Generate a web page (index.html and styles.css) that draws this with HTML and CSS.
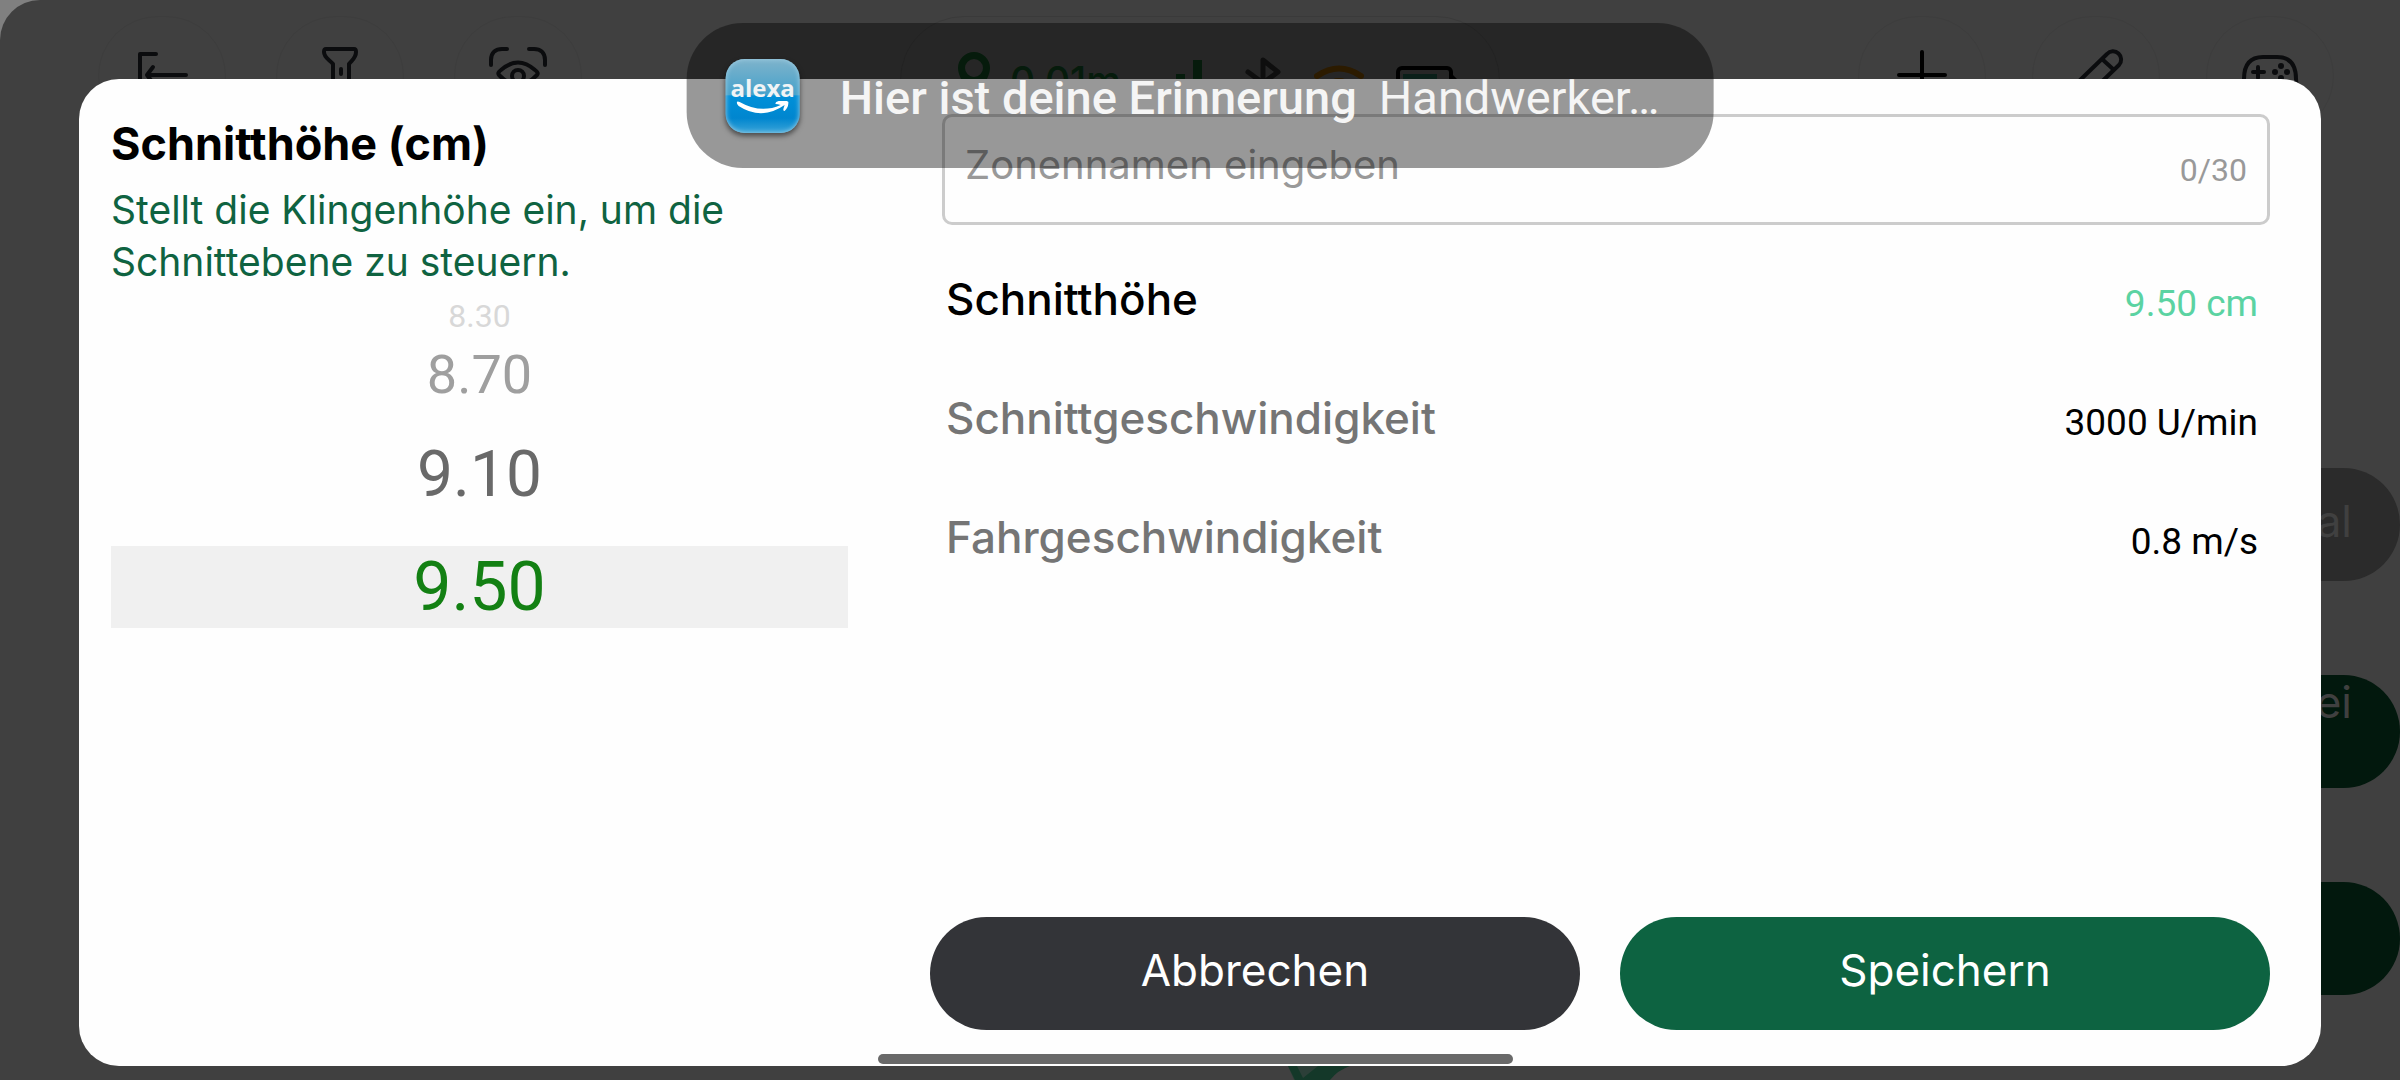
FILE: index.html
```html
<!DOCTYPE html>
<html lang="de">
<head>
    <meta charset="UTF-8">
    <meta name="viewport" content="width=device-width, initial-scale=1.0">
    <title>Schnitthöhe</title>
    <link rel="stylesheet" href="styles.css">
</head>
<body>

<div class="app">
    <div class="toolbar">
        <div class="tools">
            <button class="tool" aria-label="Verlassen">
                <svg class="icon" viewBox="0 0 60 60" fill="none" stroke="#0b0c0e" stroke-width="4" stroke-linecap="round" stroke-linejoin="round"><path d="M24 9H8V51H24M54 30H16M21 22L15 30L21 38"/></svg>
            </button>
            <button class="tool" aria-label="Licht">
                <svg class="icon" viewBox="0 0 60 60" fill="none" stroke="#0b0c0e" stroke-width="4" stroke-linecap="round" stroke-linejoin="round"><path d="M16 4H44Q46 4 46 7C46 13 42 15 39 19V52Q39 54 37 54H25Q23 54 23 52V19C20 15 14 13 14 7Q14 4 16 4ZM31 24V29"/></svg>
            </button>
            <button class="tool" aria-label="Ansicht">
                <svg class="icon" viewBox="0 0 60 60" fill="none" stroke="#0b0c0e" stroke-width="4" stroke-linecap="round"><path d="M3 20V15C3 7 8 4 14 4H19M41 4H46C52 4 57 7 57 15V20M3 40V45Q3 56 14 56H19M41 56H46Q57 56 57 45V40"/><path d="M11 30Q9 28 13 25Q30 10 47 25Q51 28 49 30Q30 50 11 30Z"/><circle cx="30" cy="31" r="6"/></svg>
            </button>
        </div>
        <div class="status">
            <svg class="status-icon" viewBox="0 0 32 56"><path fill="#0a2e14" fill-rule="evenodd" d="M16 0A16 16 0 0 0 0 16C0 28 16 46 16 46S32 28 32 16A16 16 0 0 0 16 0ZM16 7A9 9 0 1 1 16 25A9 9 0 0 1 16 7Z"/></svg>
            <span class="status-text">0.01m</span>
            <svg class="status-icon signal" viewBox="0 0 44 56" fill="#0a2e14"><path d="M0 22H9V48H0ZM17 8H26V48H17Z"/></svg>
            <svg class="status-icon bluetooth" viewBox="0 0 38 56" fill="none" stroke="#181818" stroke-width="5" stroke-linecap="round" stroke-linejoin="round"><path d="M4 20L34 42L19 52V8L34 20L4 42"/></svg>
            <svg class="status-icon wifi" viewBox="0 0 50 56" fill="none" stroke="#4a2d00" stroke-width="6" stroke-linecap="round"><path d="M3 24Q25 9 47 24M13 34Q25 24 37 34"/></svg>
            <svg class="status-icon" viewBox="0 0 64 56"><rect x="2" y="16" width="53" height="30" rx="4" fill="none" stroke="#000" stroke-width="4"/><rect x="7" y="22" width="34" height="18" fill="#12352b"/><path d="M56 22L62 28V36L56 42Z"/></svg>
        </div>
        <div class="tools tools-right">
            <button class="tool" aria-label="Hinzufügen">
                <svg class="icon" viewBox="0 0 60 60" fill="none" stroke="#000" stroke-width="4" stroke-linecap="round"><path d="M30 7V53M7 30H53"/></svg>
            </button>
            <button class="tool" aria-label="Bearbeiten">
                <svg class="icon" viewBox="0 0 60 60" fill="none" stroke="#0b0c0e" stroke-width="4" stroke-linejoin="round"><path d="M8 41L41 9A8 8 0 0 1 53 20L20 52L6 55ZM36 14L48 25"/></svg>
            </button>
            <button class="tool" aria-label="Steuern">
                <svg class="icon" viewBox="0 0 60 60" fill="none" stroke="#0b0c0e" stroke-width="4" stroke-linecap="round"><path d="M23 12H37Q56 12 56 34C58 54 49 54 43 44H17C11 54 2 54 4 34Q4 12 23 12ZM18 22V33M13 27H24"/><g fill="#0b0c0e" stroke="none"><circle cx="41" cy="21" r="3"/><circle cx="35" cy="27" r="3"/><circle cx="47" cy="27" r="3"/><circle cx="41" cy="33" r="3"/></g></svg>
            </button>
        </div>
    </div>
    <div class="side-buttons">
        <button class="side-button muted">al</button>
        <button class="side-button two-lines">ei</button>
        <button class="side-button" aria-label="Start"></button>
    </div>
    <svg class="map-mark" viewBox="0 0 62 14"><path fill="#2c3f38" d="M0 0H60L14 14H6Z"/><path fill="#143829" d="M0 0H9L15 12L30 0H62Q50 4 42 14H7Z"/></svg>
</div>

<div class="modal" role="dialog" aria-label="Schnitthöhe">
    <section class="picker-panel">
        <h1>Schnitthöhe (cm)</h1>
        <p class="description">Stellt die Klingenhöhe ein, um die Schnittebene zu steuern.</p>
        <ul class="wheel">
            <li class="wheel-far">8.30</li>
            <li class="wheel-mid">8.70</li>
            <li class="wheel-near">9.10</li>
            <li class="wheel-selected">9.50</li>
        </ul>
    </section>
    <section class="settings-panel">
        <div class="name-field">
            <input type="text" id="zoneName" maxlength="30" placeholder="Zonennamen eingeben" aria-label="Zonennamen eingeben">
            <label class="counter" for="zoneName">0/30</label>
        </div>
        <dl class="settings">
            <div class="setting active">
                <dt>Schnitthöhe</dt>
                <dd>9.50 cm</dd>
            </div>
            <div class="setting">
                <dt>Schnittgeschwindigkeit</dt>
                <dd>3000 U/min</dd>
            </div>
            <div class="setting">
                <dt>Fahrgeschwindigkeit</dt>
                <dd>0.8 m/s</dd>
            </div>
        </dl>
        <div class="actions">
            <button class="cancel">Abbrechen</button>
            <button class="save">Speichern</button>
        </div>
    </section>
</div>

<div class="toast" role="status">
    <div class="alexa">
        <span>alexa</span>
        <svg class="smile" viewBox="0 0 52 14"><path fill="#fff" d="M0 1Q1 0 3 1Q24 13 44 4Q41 3 39 3Q38 1 42 0Q50-1 52 1Q52 6 48 10Q46 10 47 7L48 4Q25 20 2 5Q0 3 0 1Z"/></svg>
    </div>
    <p><strong>Hier ist deine Erinnerung</strong>Handwerker…</p>
</div>

<div class="home-bar"></div>

</body>
</html>
```
FILE: styles.css
```css
* {
    box-sizing: border-box;
}
body {
    margin: 0;
    min-height: 100vh;
    padding: 79px 79px 14px;
    display: flex;
    position: relative;
    overflow: hidden;
    background: #808080;
    font-family: Inter, sans-serif;
    color: #000;
}
h1, p, ul, dl, dd {
    margin: 0;
    padding: 0;
}
button {
    border: none;
    padding: 0;
    font-family: inherit;
    cursor: pointer;
}

/* App behind the dialog */
.app {
    position: absolute;
    inset: 0;
    background: #404040;
    border-radius: 40px 0 0 0;
}
.toolbar {
    display: grid;
    grid-template-columns: 1fr 600px 1fr;
    padding: 16px 98px 0;
}
.tools {
    display: flex;
    gap: 50px;
}
.tools-right {
    justify-content: flex-end;
    gap: 46px;
    margin-right: -32px;
}
.tool {
    width: 128px;
    height: 120px;
    background: none;
    border-radius: 64px;
    border: 1px solid #3d3d3d;
}
.icon {
    width: 60px;
    height: 60px;
}
.status {
    display: flex;
    align-items: center;
    height: 128px;
    padding-left: 57px;
    border: 1px solid #3a3a3a;
    border-radius: 64px;
}
.status-icon {
    height: 56px;
}
.status-text {
    width: 146px;
    margin: 0 20px;
    font-size: 39px;
    font-weight: 500;
    color: #0a2e14;
}
.signal {
    margin-right: 24px;
}
.wifi {
    margin: 0 32px;
}
.side-buttons {
    position: absolute;
    top: 468px;
    right: 0;
    display: flex;
    flex-direction: column;
    gap: 94px;
}
.side-button {
    width: 260px;
    height: 113px;
    padding: 0 48px 8px 0;
    border-radius: 57px;
    background: #02180d;
    color: #404040;
    font-size: 44px;
    text-align: right;
}
.side-button.muted {
    background: #2b2b2b;
}
.side-button.two-lines {
    padding-bottom: 60px;
}
.map-mark {
    position: absolute;
    left: 1288px;
    bottom: 0;
    width: 62px;
    height: 14px;
}

/* Dialog */
.modal {
    position: relative;
    flex: 1;
    display: grid;
    grid-template-columns: 11fr 20fr;
    gap: 82px;
    padding: 35px 51px 36px 32px;
    background: #fefefe;
    border-radius: 40px;
}
h1 {
    font-size: 45px;
    line-height: 60px;
    font-weight: 700;
}
.description {
    margin-top: 10px;
    font-size: 39px;
    line-height: 52px;
    color: #0f6341;
}
.wheel {
    margin-top: 10px;
    list-style: none;
    font-family: Roboto, sans-serif;
    text-align: center;
}
.wheel-far {
    font-size: 32px;
    line-height: 36px;
    color: #d8d8d8;
}
.wheel-mid {
    font-size: 54px;
    line-height: 82px;
    color: #9f9f9f;
}
.wheel-near {
    font-size: 64px;
    line-height: 118px;
    color: #696969;
}
.wheel-selected {
    margin-top: 12px;
    font-size: 68px;
    line-height: 82px;
    background: #f0f0f0;
    color: #138013;
}
.settings-panel {
    display: flex;
    flex-direction: column;
}
.name-field {
    display: flex;
    align-items: center;
    height: 111px;
    margin-left: 12px;
    padding: 0 20px;
    border: 3px solid #ccc;
    border-radius: 10px;
}
.name-field input {
    flex: 1;
    min-width: 0;
    padding: 0 0 10px;
    border: none;
    outline: none;
    background: none;
    font-family: inherit;
    font-size: 40px;
}
.name-field input::placeholder {
    color: #999;
}
.counter {
    font-family: Roboto, sans-serif;
    font-size: 32px;
    color: #999;
}
.settings {
    padding: 15px 12px 0 16px;
}
.setting {
    display: flex;
    justify-content: space-between;
    height: 119px;
    line-height: 119px;
    font-size: 44px;
    font-weight: 500;
    color: #757575;
}
.setting dd {
    padding-top: 4px;
    font-family: Roboto, sans-serif;
    font-size: 37px;
    font-weight: 400;
    color: #000;
}
.setting.active {
    color: #000;
}
.setting.active dd {
    color: #5bd3a2;
}
.actions {
    display: flex;
    gap: 40px;
    margin-top: auto;
}
.actions button {
    flex: 1;
    height: 113px;
    padding-bottom: 8px;
    border-radius: 57px;
    font-size: 44px;
    color: #fff;
}
.actions .cancel {
    background: #333438;
}
.actions .save {
    background: #0d6341;
}

/* Notification over the dialog */
.toast {
    position: absolute;
    top: 23px;
    left: 50%;
    transform: translateX(-50%);
    display: flex;
    align-items: center;
    gap: 40px;
    height: 145px;
    padding: 0 54px 0 39px;
    border-radius: 56px;
    background: rgba(0, 0, 0, 0.4);
    font-family: Roboto, sans-serif;
    font-size: 47px;
    color: #f5f5f5;
    white-space: nowrap;
}
.toast p {
    padding-top: 4px;
}
.toast strong {
    margin-right: 22px;
    font-weight: 500;
}
.alexa {
    display: flex;
    flex-direction: column;
    align-items: center;
    width: 74px;
    height: 74px;
    padding-top: 15px;
    border-radius: 19px;
    background: linear-gradient(#7fb3cb, #46a2cb 48%, #0090d9 50%, #0086cf 80%, #3ba4d8);
    box-shadow: inset 0 0 5px #a3d2e8, 0 3px 5px rgba(0, 0, 0, 0.5);
}
.alexa span {
    font-family: "Open Sans", sans-serif;
    font-size: 24px;
    line-height: 27px;
    font-weight: 700;
    color: #f0f4f6;
}
.smile {
    width: 52px;
    height: 14px;
}
.home-bar {
    position: absolute;
    left: 50%;
    bottom: 16px;
    width: 635px;
    height: 10px;
    margin-left: -322px;
    border-radius: 5px;
    background: #696969;
}
```
